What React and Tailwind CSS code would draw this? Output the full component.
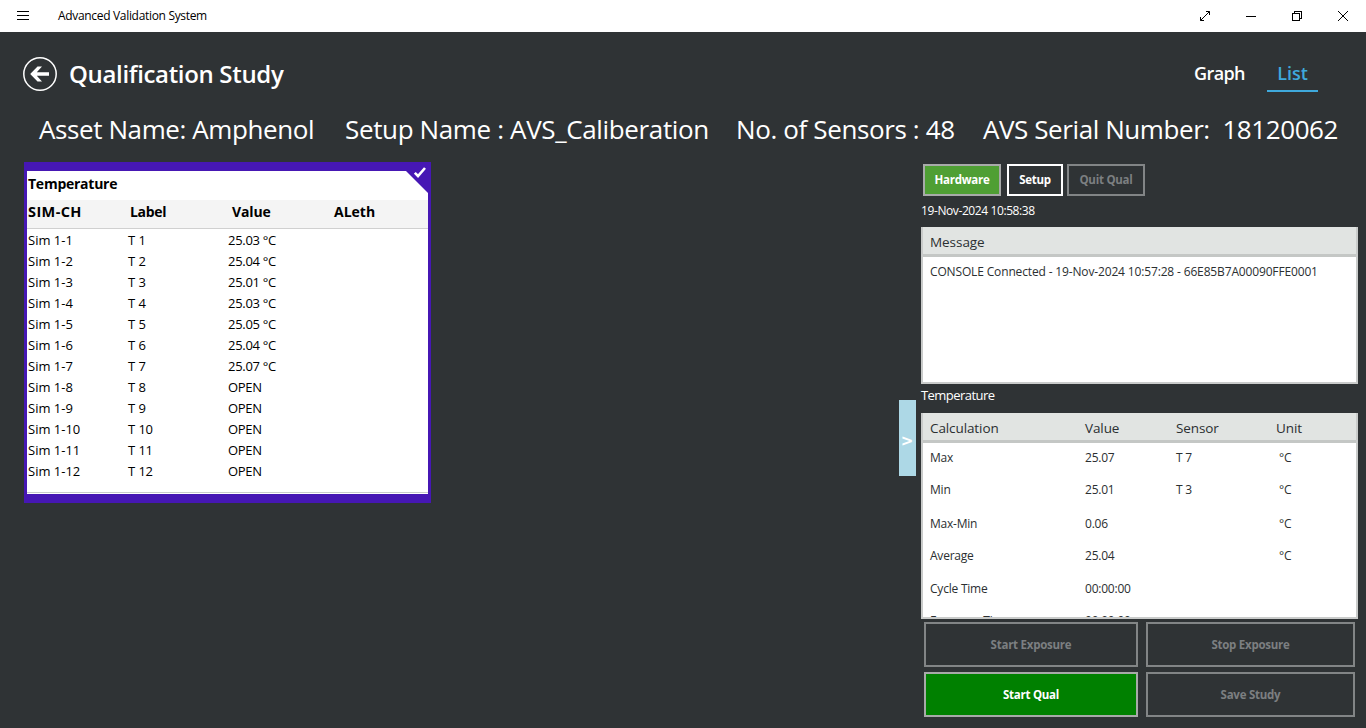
import React from 'react';

const readings = [
  ['Sim 1-1', 'T 1', '25.03 °C'],
  ['Sim 1-2', 'T 2', '25.04 °C'],
  ['Sim 1-3', 'T 3', '25.01 °C'],
  ['Sim 1-4', 'T 4', '25.03 °C'],
  ['Sim 1-5', 'T 5', '25.05 °C'],
  ['Sim 1-6', 'T 6', '25.04 °C'],
  ['Sim 1-7', 'T 7', '25.07 °C'],
  ['Sim 1-8', 'T 8', 'OPEN'],
  ['Sim 1-9', 'T 9', 'OPEN'],
  ['Sim 1-10', 'T 10', 'OPEN'],
  ['Sim 1-11', 'T 11', 'OPEN'],
  ['Sim 1-12', 'T 12', 'OPEN'],
];

const calculations = [
  ['Max', '25.07', 'T 7', '°C', 'h-8'],
  ['Min', '25.01', 'T 3', '°C', 'h-[34px]'],
  ['Max-Min', '0.06', '', '°C', 'h-8'],
  ['Average', '25.04', '', '°C', 'h-[33px]'],
  ['Cycle Time', '00:00:00', '', '', 'h-8'],
  ['Exposure Time', '00:00:00', '', '', 'h-8'],
];

function TitleBar() {
  return (
    <header className="flex h-8 shrink-0 items-center bg-white text-black">
      <svg className="ml-[17px] h-[10px] w-3" viewBox="0 0 12 10" stroke="currentColor" shapeRendering="crispEdges">
        <path d="M0 .5h12M0 4.5h12M0 8.5h12" />
      </svg>
      <span className="ml-[29px] text-[12px] leading-4 tracking-[-0.32px]">Advanced Validation System</span>
      <div className="ml-auto flex items-center">
        <span className="flex w-[46px] justify-center">
          <svg className="size-3" viewBox="0 0 12 12" fill="none" stroke="currentColor">
            <path d="M1.5 10.5l9-9M7 1.5h3.5V5M1.5 7v3.5H5" />
          </svg>
        </span>
        <span className="flex w-[46px] justify-center">
          <svg className="size-[10px]" viewBox="0 0 10 10" stroke="currentColor" shapeRendering="crispEdges">
            <path d="M0 5.5h10" />
          </svg>
        </span>
        <span className="flex w-[46px] justify-center">
          <svg className="size-[10px]" viewBox="0 0 10 10" fill="none" stroke="currentColor" shapeRendering="crispEdges">
            <path d="M.5 2.5h7v7h-7zM2.5 2.5v-2h7v7h-2" />
          </svg>
        </span>
        <span className="flex w-[46px] justify-center">
          <svg className="size-[10px]" viewBox="0 0 10 10" stroke="currentColor">
            <path d="M0 0l10 10M10 0L0 10" />
          </svg>
        </span>
      </div>
    </header>
  );
}

function PageHeader() {
  return (
    <div className="flex h-[68px] shrink-0 items-start pl-[23px] pt-6">
      <svg className="mt-px size-[34px]" viewBox="0 0 34 34">
        <circle cx="17" cy="17" r="16.200" fill="none" stroke="#fff" strokeWidth="1.5" />
        <path d="M7.2 17l7.300-7.500h4.500L13.800 15.200H26v3.600H13.800l5.200 5.700h-4.500z" fill="#fff" />
      </svg>
      <h1 className="ml-3 text-[24px] font-semibold leading-9 tracking-[-0.33px]">Qualification Study</h1>
      <nav className="ml-auto flex text-[18px] font-semibold leading-[35px]">
        <span className="w-[73px] tracking-[-0.6px]">Graph</span>
        <span className="mr-12 flex h-9 w-[51px] justify-center border-b-2 border-[#3fa9dc] tracking-[0px] text-[#3fa9dc]">List</span>
      </nav>
    </div>
  );
}

function StudyInfo() {
  return (
    <div className="flex h-[62px] shrink-0 whitespace-pre pl-[39px] pt-[11px] text-[26px] leading-9">
      <span className="w-[306px] tracking-[-0.4px]">Asset Name: Amphenol</span>
      <span className="w-[391px] tracking-[-0.36px]">Setup Name : AVS_Caliberation</span>
      <span className="w-[247px] tracking-[-0.38px]">No. of Sensors : 48</span>
      <span className="tracking-[-0.42px]">AVS Serial Number:  18120062</span>
    </div>
  );
}

function SensorCard() {
  return (
    <section className="relative ml-6 flex h-[341px] w-[407px] flex-col border-x-[3px] border-b-[9px] border-t-[9px] border-[#4617b4] bg-white text-black">
      <svg className="absolute right-0 top-0 size-[22px]" viewBox="0 0 22 22">
        <path d="M0 0h22v22z" fill="#4617b4" />
      </svg>
      <svg className="absolute -top-[4px] right-[2px] h-[11px] w-3" viewBox="0 0 12 11" fill="none" stroke="#fff" strokeWidth="2.600">
        <path d="M.8 5.800l3.200 3.200L11 1" />
      </svg>
      <h2 className="h-[29px] pl-px text-[14px] font-bold leading-[26px] tracking-[-0.25px]">Temperature</h2>
      <div className="flex h-[29px] border-b border-[#d0d0d0] bg-[#f4f4f4] pl-px text-[14px] font-bold leading-[24px] tracking-[-0.3px]">
        <span className="w-[102px] text-[14.500px] tracking-[0.4px]">SIM-CH</span>
        <span className="w-[102px]">Label</span>
        <span className="w-[102px] tracking-[-0.15px]">Value</span>
        <span className="tracking-[0px]">ALeth</span>
      </div>
      <div className="flex flex-1 flex-col border-b border-[#c8cccb] pl-px pt-px text-[13px] leading-[21px] tracking-[-0.3px]">
        {readings.map(([channel, label, value]) => (
          <div key={channel} className="flex h-[21px]">
            <span className="w-[100px] tracking-[0px]">{channel}</span>
            <span className="w-[100px] [word-spacing:0.5px]">{label}</span>
            <span>{value}</span>
          </div>
        ))}
      </div>
      <div className="h-px" />
    </section>
  );
}

function MessagePanel() {
  return (
    <div className="h-[157px] border-x-2 border-b-2 border-[#c9cbca] bg-white text-[#2b2f31]">
      <div className="h-[30px] border-b-[3px] border-[#c4c7c5] bg-[#e1e4e2] pl-[7px] text-[13.500px] leading-[30px] tracking-[-0.05px]">Message</div>
      <p className="pl-[7px] pt-[5px] text-[12px] leading-5 tracking-[-0.15px]">
        CONSOLE Connected - 19-Nov-2024 10:57:28 - 66E85B7A00090FFE0001
      </p>
    </div>
  );
}

function CalculationTable() {
  return (
    <div className="h-[206px] overflow-hidden border-x-2 border-b-2 border-[#c9cbca] bg-white text-[#2b2f31]">
      <div className="flex h-[30px] border-b-[3px] border-[#c4c7c5] bg-[#e1e4e2] pl-[7px] text-[13.500px] leading-[30px] tracking-[-0.1px]">
        <span className="w-[155px]">Calculation</span>
        <span className="w-[91px]">Value</span>
        <span className="w-[100px]">Sensor</span>
        <span>Unit</span>
      </div>
      {calculations.map(([name, value, sensor, unit, height]) => (
        <div key={name} className={`flex pl-[7px] text-[12px] leading-[29px] tracking-[-0.22px] ${height}`}>
          <span className="w-[155px]">{name}</span>
          <span className="w-[91px]">{value}</span>
          <span className="w-[103px]">{sensor}</span>
          <span>{unit}</span>
        </div>
      ))}
    </div>
  );
}

function ActionButton({ children, className }) {
  return (
    <button className={`border-2 text-center text-[11.500px] font-bold tracking-[-0.25px] ${className}`}>{children}</button>
  );
}

function SidePanel() {
  return (
    <aside className="flex w-[437px] flex-col">
      <div className="ml-[2px] mt-[2px] flex h-8">
        <ActionButton className="w-[78px] border-[#a8aaa9] bg-[#4f9f34] text-white">Hardware</ActionButton>
        <ActionButton className="ml-[6px] w-14 border-white text-white">Setup</ActionButton>
        <ActionButton className="ml-1 w-[78px] border-[#828586] text-[#7c7f81]">Quit Qual</ActionButton>
      </div>
      <p className="h-[31px] text-[12px] leading-[29px] tracking-[-0.4px]">19-Nov-2024 10:58:38</p>
      <MessagePanel />
      <p className="h-[29px] text-[13px] leading-[23px] tracking-[-0.55px]">Temperature</p>
      <CalculationTable />
      <div className="ml-[3px] mt-[3px] grid grid-cols-[214px_209px] grid-rows-[45px_45px] gap-x-2 gap-y-[5px]">
        <ActionButton className="border-[#828586] text-[#7c7f81]">Start Exposure</ActionButton>
        <ActionButton className="border-[#828586] text-[#7c7f81]">Stop Exposure</ActionButton>
        <ActionButton className="border-[#a8aaa9] bg-[#008000] text-white">Start Qual</ActionButton>
        <ActionButton className="border-[#828586] text-[#7c7f81]">Save Study</ActionButton>
      </div>
    </aside>
  );
}

export default function App() {
  return (
    <div className="flex h-[728px] w-[1366px] flex-col overflow-hidden bg-[#2f3335] font-['Open_Sans','Noto_Sans',sans-serif] text-white">
      <TitleBar />
      <PageHeader />
      <StudyInfo />
      <main className="flex flex-1 items-start">
        <SensorCard />
        <button className="ml-auto mr-[5px] mt-[238px] flex h-[76px] w-[17px] items-center justify-center bg-[#add8e6] pr-px pt-[6px] font-['DejaVu_Sans',sans-serif] text-[15px] font-bold leading-none">&gt;</button>
        <div className="mr-2">
          <SidePanel />
        </div>
      </main>
    </div>
  );
}
